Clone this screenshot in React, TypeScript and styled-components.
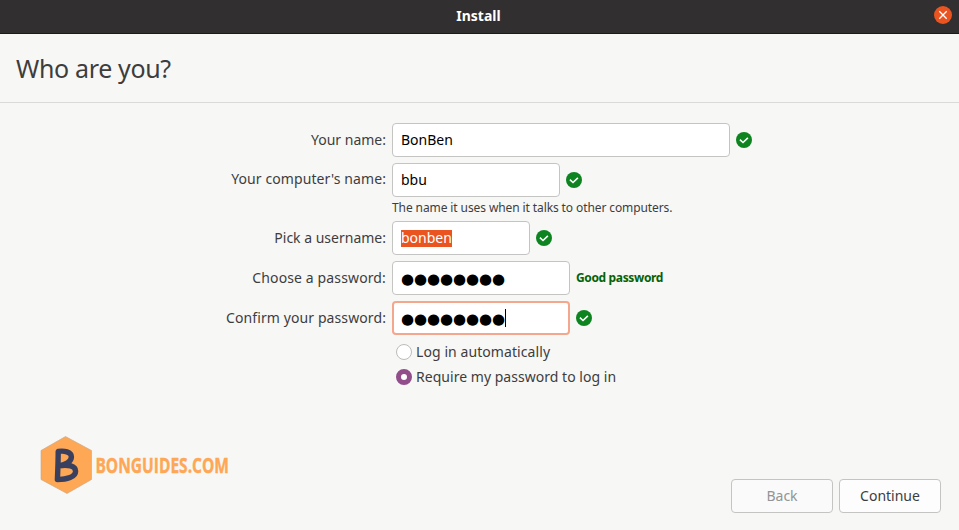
import React from 'react';
import styled, { createGlobalStyle, css } from 'styled-components';

const GlobalStyle = createGlobalStyle`
  * { box-sizing: border-box; }
  body {
    margin: 0;
    background: #f7f7f6;
    color: #3d3d3d;
    font: 14px/20px "Noto Sans", "Open Sans", sans-serif;
  }
`;

const Window = styled.div`
  display: flex;
  flex-direction: column;
  width: 100%;
  height: 530px;
  overflow: hidden;
`;

const TitleBar = styled.header`
  display: grid;
  grid-template-columns: 1fr auto 1fr;
  align-items: center;
  height: 34px;
  padding: 0 7px 4px;
  background: #322f30;
  border-bottom: 1px solid #1d1a1b;
  color: #fff;
`;

const WindowTitle = styled.span`
  grid-column: 2;
  font-weight: 700;
  line-height: 20px;
  padding: 3px 2px 0 0;
`;

const CloseButton = styled.button`
  justify-self: end;
  width: 18px;
  height: 18px;
  padding: 0;
  border: 0;
  border-radius: 50%;
  background: #e95420;
  svg { display: block; }
`;

const Heading = styled.h1`
  height: 69px;
  margin: 0;
  padding: 0 16px;
  border-bottom: 1px solid #dadada;
  font-size: 25px;
  font-weight: 400;
  letter-spacing: -0.34px;
  line-height: 68px;
`;

const Form = styled.form`
  display: grid;
  grid-template-columns: 386px 1fr;
  column-gap: 6px;
  padding-top: 20px;
`;

const Label = styled.label<{ $spacing?: string; $raised?: boolean }>`
  height: 34px;
  letter-spacing: ${(p) => p.$spacing ?? 'normal'};
  line-height: ${(p) => (p.$raised ? 32 : 34)}px;
  text-align: right;
`;

const Field = styled.div`
  display: flex;
  align-items: center;
  gap: 6px;
  height: 34px;
  margin-bottom: 6px;
`;

const Entry = styled.div<{ $width: number; $focused?: boolean }>`
  display: flex;
  align-items: center;
  width: ${(p) => p.$width}px;
  height: 34px;
  padding-left: 8px;
  border: 1px solid #c4c4c3;
  border-radius: 4px;
  background: #fff;
  color: #000;
  ${(p) =>
    p.$focused &&
    css`
      padding-left: 7px;
      border: 2px solid #f4a78c;
    `}
`;

const Selection = styled.span`
  height: 17px;
  background: #e95420;
  color: #fff;
  line-height: 16px;
`;

const Bullets = styled.span`
  padding-top: 1px;
  font: 15px/20px "DejaVu Sans", sans-serif;
  letter-spacing: -0.1px;
`;

const Caret = styled.span`
  width: 1px;
  height: 18px;
  background: #000;
`;

const Hint = styled.div`
  grid-column: 2;
  height: 18px;
  font-size: 12px;
  letter-spacing: -0.1px;
  line-height: 16px;
  margin-top: -3px;
  margin-bottom: 3px;
`;

const Strength = styled.span`
  color: #056205;
  font-size: 12px;
  font-weight: 700;
  letter-spacing: -0.36px;
`;

const Choices = styled.div`
  grid-column: 2;
  display: flex;
  flex-direction: column;
  margin-top: -2px;
  padding-left: 4px;
`;

const Choice = styled.label<{ $spacing: string }>`
  display: flex;
  align-items: center;
  gap: 4px;
  height: 25px;
  letter-spacing: ${(p) => p.$spacing};
`;

const Radio = styled.span<{ $on?: boolean }>`
  width: 16px;
  height: 16px;
  border-radius: 50%;
  border: ${(p) => (p.$on ? '5px solid #924d8b' : '1px solid #bcbcbb')};
  background: #fff;
`;

const Footer = styled.footer`
  display: flex;
  align-items: flex-end;
  justify-content: space-between;
  margin-top: auto;
  padding: 0 18px 17px 40px;
`;

const Logo = styled.svg`
  display: block;
  overflow: visible;
  margin-bottom: 19px;
`;

const Actions = styled.div`
  display: flex;
  gap: 6px;
`;

const Button = styled.button`
  width: 102px;
  height: 34px;
  padding: 0 0 1px;
  border: 1px solid #c4c4c3;
  border-radius: 4px;
  background: #fdfdfd;
  color: #3d3d3d;
  font: inherit;
  &:disabled {
    background: #fafafa;
    color: #929595;
  }
`;

const Valid = () => (
  <svg width="16" height="16" viewBox="0 0 16 16">
    <circle cx="8" cy="8" r="8" fill="#0e8420" />
    <path d="M3.9 7.7l3.1 2.8 4.9-4.6" fill="none" stroke="#fff" strokeWidth="1.6" />
  </svg>
);

const dots = '●'.repeat(8);

export default function App() {
  return (
    <Window>
      <GlobalStyle />
      <TitleBar>
        <WindowTitle>Install</WindowTitle>
        <CloseButton type="button" aria-label="Close">
          <svg width="18" height="18" viewBox="0 0 18 18">
            <path d="M5.3 5.3l7.4 7.4M12.7 5.3l-7.4 7.4" stroke="#fff" strokeWidth="1.3" />
          </svg>
        </CloseButton>
      </TitleBar>
      <Heading>Who are you?</Heading>
      <Form>
        <Label>Your name:</Label>
        <Field><Entry $width={338}>BonBen</Entry><Valid /></Field>
        <Label $spacing="0.09px" $raised>Your computer's name:</Label>
        <Field><Entry $width={168}>bbu</Entry><Valid /></Field>
        <Hint>The name it uses when it talks to other computers.</Hint>
        <Label>Pick a username:</Label>
        <Field><Entry $width={138}><Selection>bonben</Selection></Entry><Valid /></Field>
        <Label $spacing="0.13px">Choose a password:</Label>
        <Field><Entry $width={178}><Bullets>{dots}</Bullets></Entry><Strength>Good password</Strength></Field>
        <Label $spacing="0.1px">Confirm your password:</Label>
        <Field><Entry $width={178} $focused><Bullets>{dots}</Bullets><Caret /></Entry><Valid /></Field>
        <Choices>
          <Choice $spacing="0.08px"><Radio />Log in automatically</Choice>
          <Choice $spacing="0.03px"><Radio $on />Require my password to log in</Choice>
        </Choices>
      </Form>
      <Footer>
        <Logo width="192" height="58" viewBox="0 0 192 58">
          <path d="M25.5 0.5L51.5 14.5V43.5L27 57.5L1 43.5V14.5Z" fill="#fea755" stroke="#c9a583" strokeWidth="0.6" />
          <path d="M18.2 15.5C24 14.3 31.4 16 31.4 20.8C31.4 25.5 26.5 28.2 19 29.8C28 28.2 35.6 30 35.6 35.2C35.6 41 27 43.6 17.4 43.6C17.8 34 18.2 25 18.2 15.5Z" fill="none" stroke="#39405f" strokeWidth="5.4" strokeLinecap="round" strokeLinejoin="round" />
          <text x="55.4" y="36.6" fill="#fea755" stroke="#fea755" strokeWidth="0.4" fontFamily="Open Sans, Noto Sans, sans-serif" fontWeight="700" fontSize="21.5" textLength="133.6" lengthAdjust="spacingAndGlyphs">BONGUIDES.COM</text>
        </Logo>
        <Actions>
          <Button disabled>Back</Button>
          <Button>Continue</Button>
        </Actions>
      </Footer>
    </Window>
  );
}
